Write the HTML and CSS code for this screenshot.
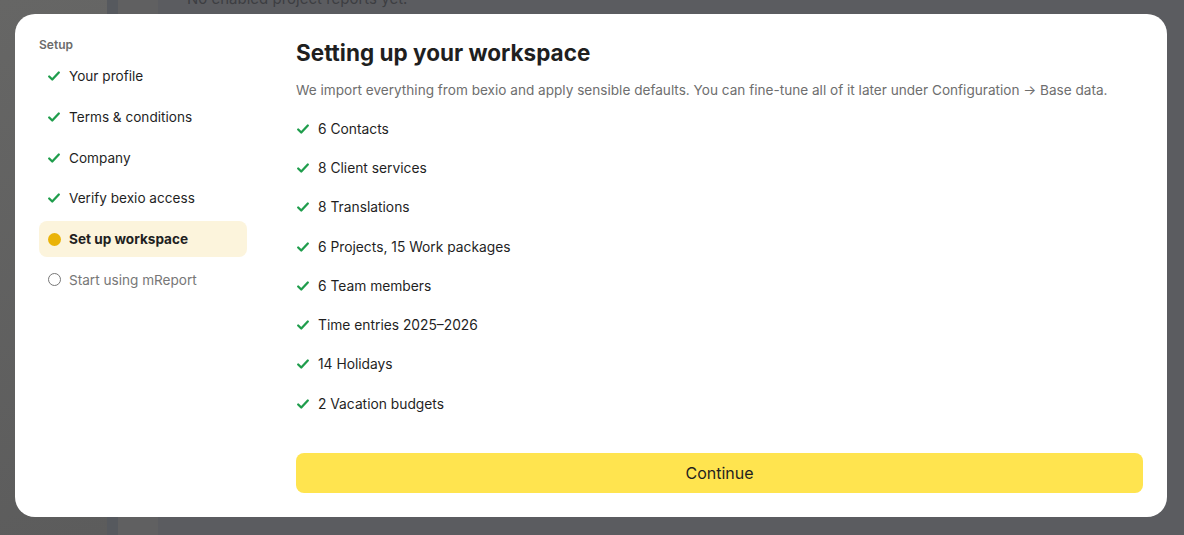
FILE: index.html
```html
<!DOCTYPE html>
<html lang="en">
<head>
  <meta charset="UTF-8" />
  <meta name="viewport" content="width=device-width, initial-scale=1.0"/>
  <title>mReport – Setup</title>
  <link rel="stylesheet" href="styles.css">
</head>
<body>

  <!-- app shell behind the setup dialog -->
  <div class="app">
    <aside class="app-sidebar"></aside>
    <div class="app-rail"></div>
    <div class="app-nav"></div>
    <main class="app-main">
      <p class="empty-note">No enabled project reports yet.</p>
    </main>
  </div>

  <div class="backdrop">
    <div class="modal">
      <nav class="steps">
        <div class="steps-title">Setup</div>
        <ul>
          <li class="step done"><span class="step-icon"><svg viewBox="0 0 16 16"><path d="M2.5 8.5l3.5 3.5 7.5-8"/></svg></span>Your profile</li>
          <li class="step done"><span class="step-icon"><svg viewBox="0 0 16 16"><path d="M2.5 8.5l3.5 3.5 7.5-8"/></svg></span>Terms &amp; conditions</li>
          <li class="step done"><span class="step-icon"><svg viewBox="0 0 16 16"><path d="M2.5 8.5l3.5 3.5 7.5-8"/></svg></span>Company</li>
          <li class="step done"><span class="step-icon"><svg viewBox="0 0 16 16"><path d="M2.5 8.5l3.5 3.5 7.5-8"/></svg></span>Verify bexio access</li>
          <li class="step current"><span class="step-icon"><span class="dot"></span></span>Set up workspace</li>
          <li class="step todo"><span class="step-icon"><span class="ring"></span></span>Start using mReport</li>
        </ul>
      </nav>

      <section class="content">
        <h2>Setting up your workspace</h2>
        <p class="lead">We import everything from bexio and apply sensible defaults. You can fine-tune all of it later under Configuration → Base data.</p>

        <ul class="imports">
          <li><svg viewBox="0 0 16 16"><path d="M2.5 8.5l3.5 3.5 7.5-8"/></svg>6 Contacts</li>
          <li><svg viewBox="0 0 16 16"><path d="M2.5 8.5l3.5 3.5 7.5-8"/></svg>8 Client services</li>
          <li><svg viewBox="0 0 16 16"><path d="M2.5 8.5l3.5 3.5 7.5-8"/></svg>8 Translations</li>
          <li><svg viewBox="0 0 16 16"><path d="M2.5 8.5l3.5 3.5 7.5-8"/></svg>6 Projects, 15 Work packages</li>
          <li><svg viewBox="0 0 16 16"><path d="M2.5 8.5l3.5 3.5 7.5-8"/></svg>6 Team members</li>
          <li><svg viewBox="0 0 16 16"><path d="M2.5 8.5l3.5 3.5 7.5-8"/></svg>Time entries 2025–2026</li>
          <li><svg viewBox="0 0 16 16"><path d="M2.5 8.5l3.5 3.5 7.5-8"/></svg>14 Holidays</li>
          <li><svg viewBox="0 0 16 16"><path d="M2.5 8.5l3.5 3.5 7.5-8"/></svg>2 Vacation budgets</li>
        </ul>

        <button class="primary-btn">Continue</button>
      </section>
    </div>
  </div>

</body>
</html>
```

FILE: styles.css
```css
:root {
  --text: #1f1f1f;
  --muted: #6e6e6e;
  --green: #1f9d4c;
  --yellow: #ffe44f;
  --yellow-soft: #fcf4dc;
  --amber: #eab308;
}

* {
  box-sizing: border-box;
}

body {
  margin: 0;
  height: 100vh;
  overflow: hidden;
  font-family: Inter, 'Noto Sans', sans-serif;
  color: var(--text);
}

/* dimmed app shell */
.app {
  display: flex;
  height: 100vh;
  background: #5b5c60;
}

.app-sidebar {
  width: 107px;
  background: linear-gradient(160deg, #666665, #5c5c5c);
}

.app-rail {
  width: 11px;
  background: #56595e;
}

.app-nav {
  width: 40px;
  background: #606061;
}

.app-main {
  flex: 1;
  padding-left: 29px;
}

.empty-note {
  margin: -11px 0 0;
  font-size: 15px;
  color: #3d3e42;
}

.backdrop {
  position: fixed;
  inset: 0;
  padding: 14px 17px 18px 15px;
}

.modal {
  display: flex;
  gap: 49px;
  height: 100%;
  padding: 23px 24px 24px;
  background: #fff;
  border-radius: 20px;
}

/* step list */
.steps {
  width: 208px;
  flex-shrink: 0;
}

.steps-title {
  font-size: 12px;
  line-height: 16px;
  font-weight: 600;
  color: #6b6b6b;
  margin-bottom: 5px;
}

.steps ul,
.imports {
  list-style: none;
  margin: 0;
  padding: 0;
}

.steps ul {
  display: flex;
  flex-direction: column;
  gap: 4.8px;
}

.step {
  display: flex;
  align-items: center;
  gap: 8px;
  height: 36px;
  padding: 0 8px;
  font-size: 13.6px;
  border-radius: 8px;
}

.step-icon {
  width: 14px;
  height: 14px;
  display: flex;
  align-items: center;
  justify-content: center;
}

.step-icon svg,
.imports svg {
  width: 14px;
  height: 14px;
  fill: none;
  stroke: var(--green);
  stroke-width: 2.6;
  stroke-linecap: round;
  stroke-linejoin: round;
}

.step.current {
  background: var(--yellow-soft);
  font-weight: 700;
}

.dot {
  width: 13px;
  height: 13px;
  border-radius: 50%;
  background: var(--amber);
}

.ring {
  width: 13px;
  height: 13px;
  border-radius: 50%;
  border: 1.3px solid #777;
}

.step.todo {
  color: #777;
}

/* main column */
.content {
  flex: 1;
  padding-top: 2px;
}

h2 {
  margin: 0;
  font-size: 22.5px;
  line-height: 28px;
  font-weight: 700;
  letter-spacing: 0;
}

.lead {
  margin: 13px 0 9px;
  font-size: 13.6px;
  line-height: 20px;
  color: var(--muted);
}

.imports li {
  display: flex;
  align-items: center;
  gap: 8px;
  height: 39.3px;
  font-size: 13.8px;
}

.primary-btn {
  display: block;
  width: 100%;
  height: 40px;
  margin-top: 29.5px;
  font-family: inherit;
  font-size: 16px;
  font-weight: 400;
  color: var(--text);
  background: var(--yellow);
  border: none;
  border-radius: 8px;
  cursor: pointer;
}
```
